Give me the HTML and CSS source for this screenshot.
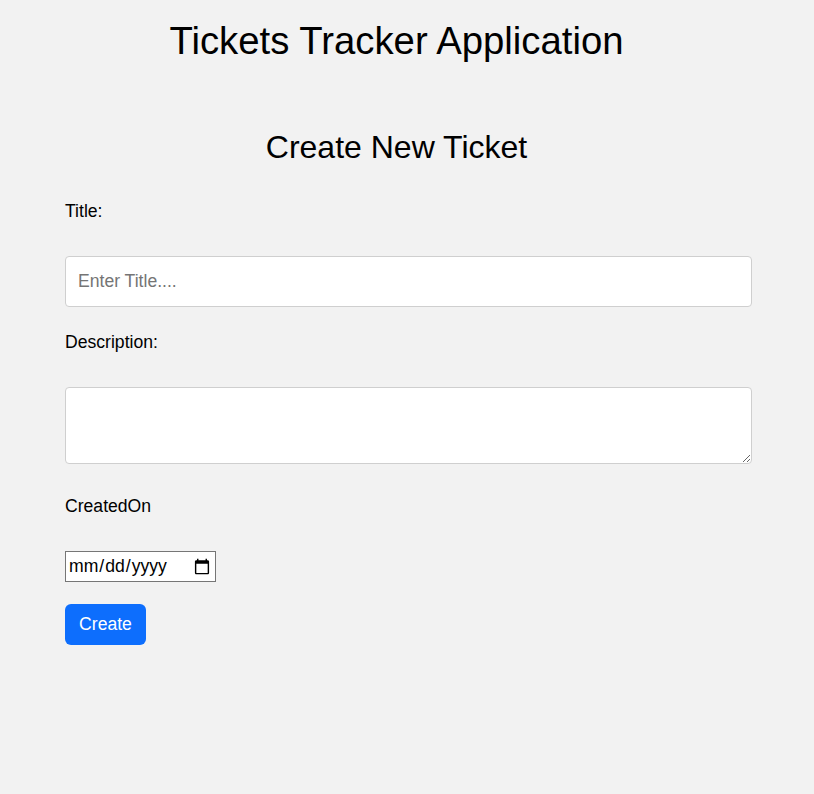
FILE: index.html
```html
<!DOCTYPE html>
<html lang="en">
<head>
<meta charset="utf-8">
<title>Tickets Tracker Application</title>
<link rel="stylesheet" href="styles.css">
</head>
<body>
<div class="page">
  <header class="app-header">
    <h1 class="app-title">Tickets Tracker Application</h1>
  </header>
  <main class="content">
    <h2 class="form-title">Create New Ticket</h2>
    <form class="ticket-form">
      <label class="field-label" for="title">Title:</label>
      <input class="field-input" id="title" type="text" placeholder="Enter Title....">
      <label class="field-label" for="description">Description:</label>
      <textarea class="field-textarea" id="description"></textarea>
      <label class="field-label" for="createdOn">CreatedOn</label>
      <input class="field-date" id="createdOn" type="date">
      <button class="btn-create" type="button">Create</button>
    </form>
  </main>
</div>
</body>
</html>
```
FILE: styles.css
```css
html, body {
  margin: 0;
  padding: 0;
  background: #f2f2f2;
}
body {
  font-family: "Liberation Sans", Arial, sans-serif;
  color: #000;
  min-height: 794px;
}
.page {
  width: 793px;
}
.app-header {
  padding-top: 19px;
}
.app-title {
  margin: 0;
  font-size: 38.3px;
  line-height: 44px;
  font-weight: 400;
  text-align: center;
}
.content {
  padding-top: 66px;
}
.form-title {
  margin: 0;
  font-size: 32px;
  line-height: 36px;
  font-weight: 400;
  text-align: center;
}
.ticket-form {
  display: flex;
  flex-direction: column;
  align-items: flex-start;
  padding-left: 65px;
  padding-top: 34px;
}
.field-label {
  display: block;
  font-size: 17.6px;
  line-height: 24px;
  margin-bottom: 33px;
}
.field-input,
.field-textarea {
  box-sizing: border-box;
  width: 687px;
  background: #fff;
  border: 1px solid #cfcfcf;
  border-radius: 4px;
  font-family: "Liberation Sans", Arial, sans-serif;
  font-size: 17.6px;
  padding: 0 12px;
  color: #212529;
  outline: none;
}
.field-input {
  height: 51px;
  margin-bottom: 23px;
}
.field-input::placeholder {
  color: #757575;
}
.field-textarea {
  height: 77px;
  margin-bottom: 30px;
  padding-top: 8px;
  resize: vertical;
}
.field-date {
  box-sizing: border-box;
  width: 151px;
  height: 31px;
  font-family: "Liberation Sans", Arial, sans-serif;
  font-size: 17.6px;
  padding: 0 2px;
  border: 1px solid #767676;
  border-radius: 0;
  background: #fff;
  margin: 0 0 22px 0;
  color: #000;
}
.btn-create {
  box-sizing: border-box;
  width: 81px;
  height: 41px;
  background: #0d6efd;
  color: #fff;
  border: none;
  border-radius: 6px;
  font-family: "Liberation Sans", Arial, sans-serif;
  font-size: 17.6px;
  padding: 0;
  cursor: pointer;
}
```
